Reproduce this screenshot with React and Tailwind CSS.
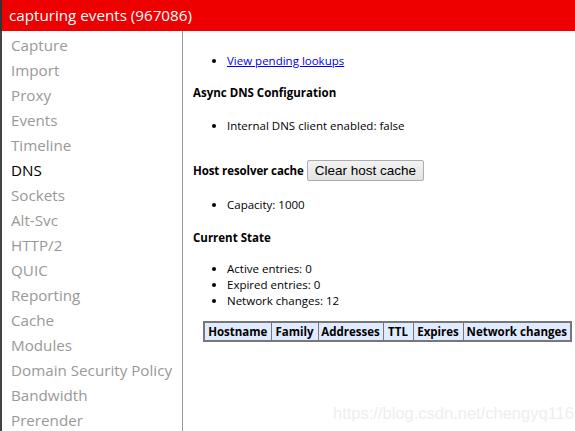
import React from 'react';

const tabs = [
  'Capture',
  'Import',
  'Proxy',
  'Events',
  'Timeline',
  'DNS',
  'Sockets',
  'Alt-Svc',
  'HTTP/2',
  'QUIC',
  'Reporting',
  'Cache',
  'Modules',
  'Domain Security Policy',
  'Bandwidth',
  'Prerender',
];

const columns = [
  { label: 'Hostname', w: 'w-[67px]' },
  { label: 'Family', w: 'w-[47px]' },
  { label: 'Addresses', w: 'w-[65px]' },
  { label: 'TTL', w: 'w-[30px]' },
  { label: 'Expires', w: 'w-[50px]' },
  { label: 'Network changes', w: 'w-[108px]' },
];

const Bullets = ({ items, className = '' }) => (
  <ul className={`list-disc pl-[34px] ${className}`}>
    {items.map((it, i) => (
      <li key={i} className="leading-[16px]">
        {it}
      </li>
    ))}
  </ul>
);

export default function App() {
  return (
    <div className="relative w-[575px] h-[431px] overflow-hidden bg-white flex flex-col font-['Open_Sans',sans-serif]">
      {/* Title bar */}
      <div className="h-[31px] shrink-0 bg-[#ee0000] text-white text-[15.2px] pl-[7px] flex items-center border-l-2 border-[#333]">
        capturing events (967086)
      </div>

      <div className="flex flex-1 min-h-0">
        {/* Tabs */}
        <aside className="w-[183px] shrink-0 border-r border-[#999] pt-[2px] border-l-2 border-l-[#444]">
          {tabs.map((t) => (
            <div
              key={t}
              className={`h-[25px] leading-[25px] pl-[9px] text-[15.2px] whitespace-nowrap ${
                t === 'DNS' ? 'text-black' : 'text-[#999]'
              }`}
            >
              {t}
            </div>
          ))}
        </aside>

        {/* DNS view */}
        <main className="flex-1 pl-[10px] text-[11.5px] text-black">
          <Bullets
            className="mt-[22px]"
            items={[
              <a key="l" href="#" className="text-[#0000ee] underline">
                View pending lookups
              </a>,
            ]}
          />
          <div className="mt-[16px] font-bold leading-[16px]">Async DNS Configuration</div>
          <Bullets className="mt-[17px]" items={['Internal DNS client enabled: false']} />

          <div className="mt-[26px] flex items-center gap-[3px] h-[21px]">
            <span className="font-bold tracking-[-0.1px]">Host resolver cache</span>
            <button className="h-[21px] px-[7px] border border-[#adadad] rounded-[2px] bg-gradient-to-b from-[#f3f3f3] to-[#e2e2e2] text-[13.5px] font-['Liberation_Sans',sans-serif] leading-[19px]">
              Clear host cache
            </button>
          </div>

          <Bullets className="mt-[16px]" items={['Capacity: 1000']} />
          <div className="mt-[17px] font-bold leading-[16px]">Current State</div>
          <Bullets
            className="mt-[15px]"
            items={['Active entries: 0', 'Expired entries: 0', 'Network changes: 12']}
          />

          <table className="mt-[12px] ml-[10px] border-collapse border-2 border-[#777]">
            <thead>
              <tr>
                {columns.map((c) => (
                  <th
                    key={c.label}
                    className={`${c.w} h-[18px] border border-[#777] bg-[#e0ebff] font-bold text-center px-[2px] whitespace-nowrap`}
                  >
                    {c.label}
                  </th>
                ))}
              </tr>
            </thead>
          </table>
        </main>
      </div>

      {/* watermark */}
      <div className="absolute left-[333px] top-[401px] text-[16.5px] text-[#eeeeee] font-['Liberation_Sans',sans-serif] pointer-events-none">
        https://blog.csdn.net/chengyq116
      </div>
    </div>
  );
}
